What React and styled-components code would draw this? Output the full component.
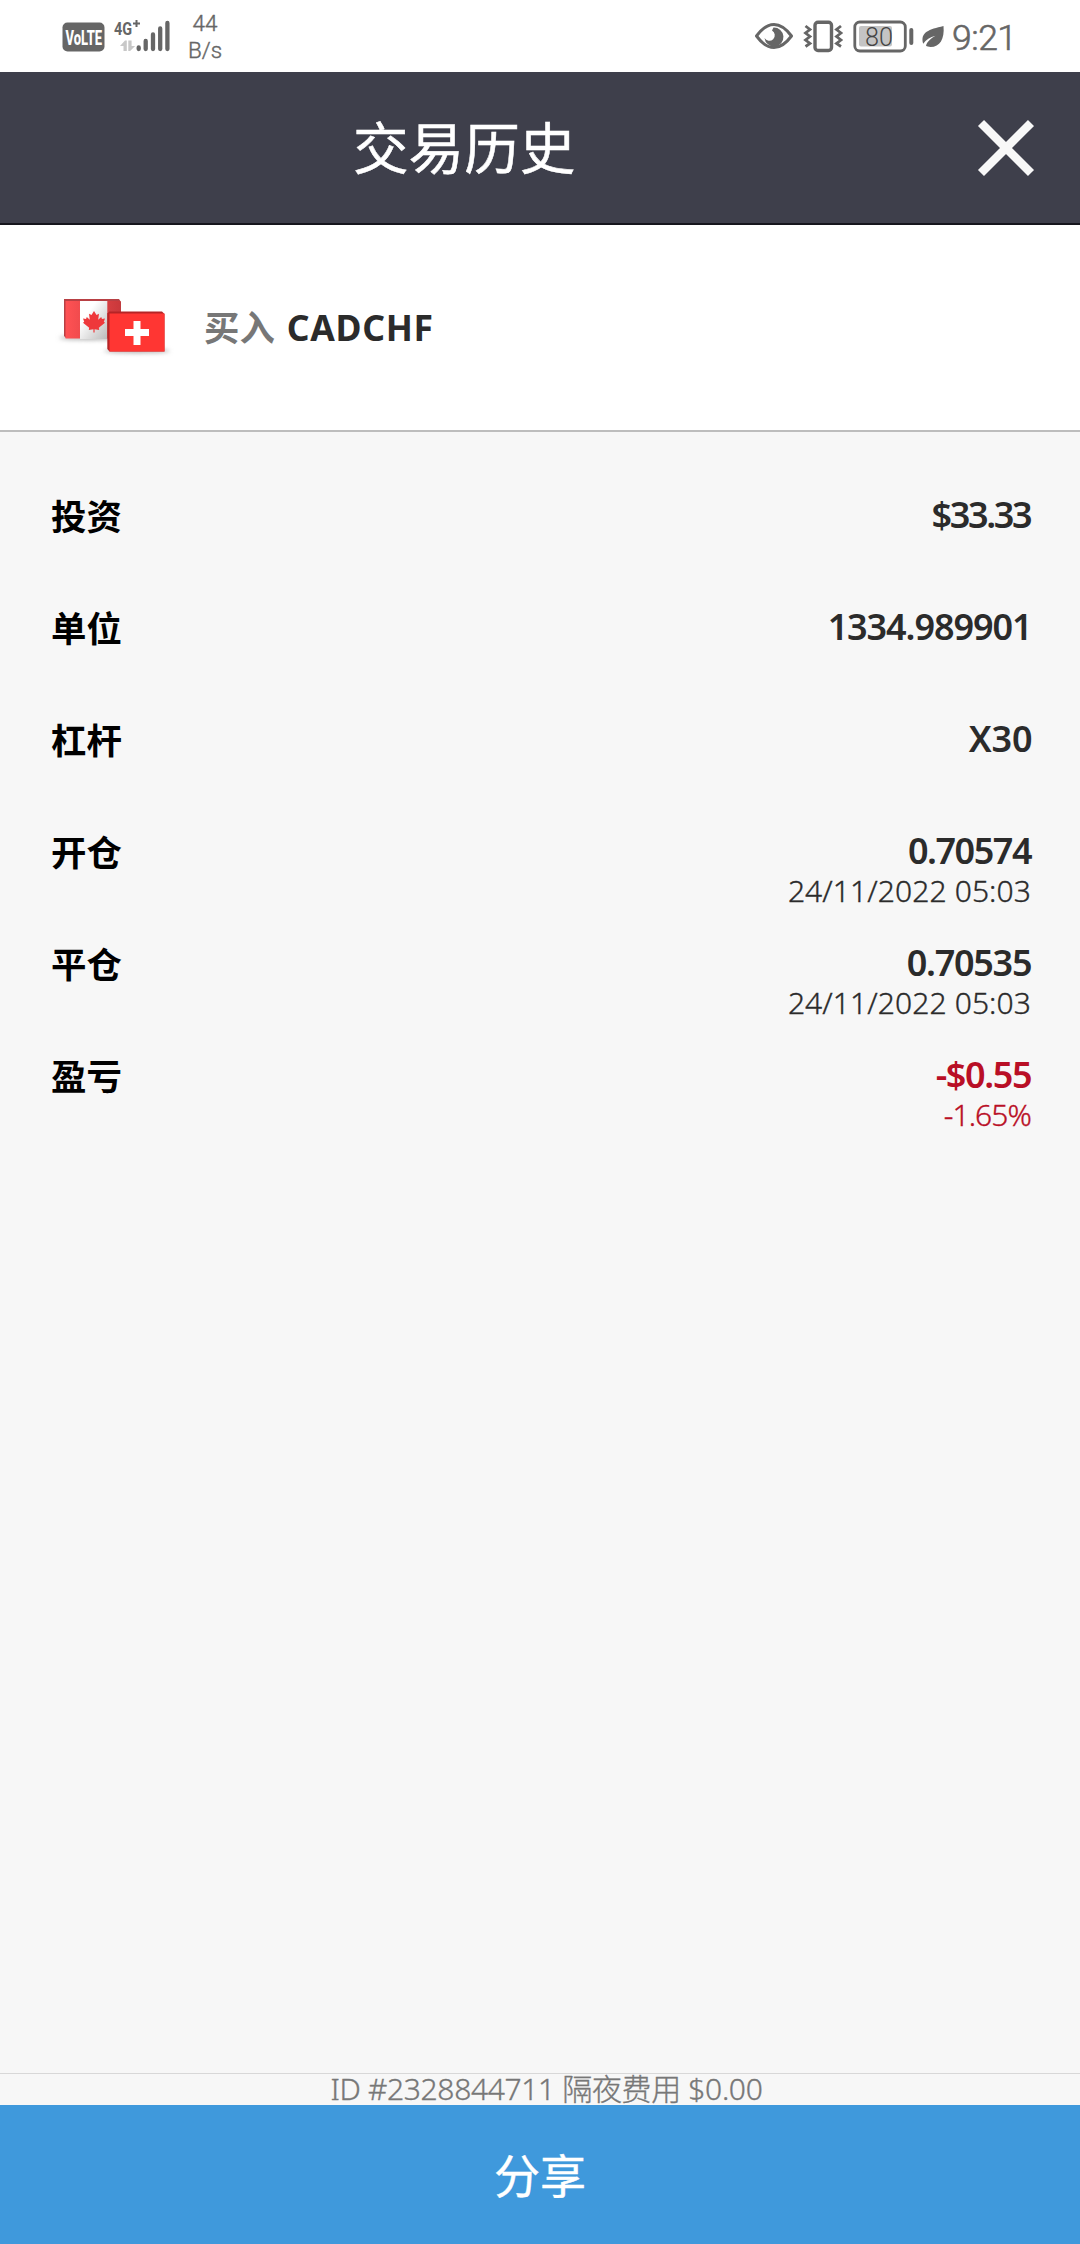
import React from 'react'
import styled, { createGlobalStyle } from 'styled-components'

const GlobalStyle = createGlobalStyle`
    * {
        box-sizing: border-box;
    }
    body {
        margin: 0;
        background: #f7f7f7;
        font-family: 'Noto Sans', 'Noto Sans CJK SC', sans-serif;
    }
`

const Screen = styled.div`
    width: 1080px;
    height: 2244px;
    display: flex;
    flex-direction: column;
    background: #f7f7f7;
    overflow: hidden;
`

const StatusBar = styled.div`
    height: 72px;
    flex: none;
    display: flex;
    justify-content: space-between;
    padding: 0 64px 0 62px;
    background: #fff;
    color: #666;
    font-family: Roboto, sans-serif;
`

const StatusGroup = styled.div`
    display: flex;
    align-items: flex-start;
`

const NetSpeed = styled.div`
    width: 40px;
    margin-left: 10px;
    padding-top: 10px;
    font-size: 22.5px;
    line-height: 27px;
    font-weight: 300;
    -webkit-text-stroke: 0.4px;
    text-align: center;
`

const Clock = styled.div`
    width: 64px;
    margin-left: 5px;
    padding-top: 14px;
    font-size: 35.5px;
    line-height: 48px;
    font-weight: 300;
    -webkit-text-stroke: 0.6px;
    letter-spacing: -0.5px;
    white-space: nowrap;
`

const Header = styled.header`
    height: 153px;
    flex: none;
    display: flex;
    justify-content: space-between;
    align-items: center;
    padding: 0 43px 0 353px;
    background: #3e3f4b;
    border-bottom: 2px solid #16151d;
`

const Title = styled.h1`
    margin: 0;
    padding-bottom: 5px;
    color: #fff;
    font-family: 'Noto Sans CJK SC', sans-serif;
    font-size: 55.6px;
    line-height: 80px;
    font-weight: 400;
    -webkit-text-stroke: 0.5px;
`

const CloseButton = styled.button`
    display: flex;
    padding: 0;
    border: 0;
    background: none;
`

const Instrument = styled.section`
    height: 207px;
    flex: none;
    display: flex;
    align-items: center;
    padding: 0 0 2px 54px;
    background: #fff;
    border-bottom: 2px solid #bdbdbd;
`

const Pair = styled.div`
    display: flex;
    align-items: baseline;
    gap: 12px;
    margin-left: 27px;
    color: #2b2b2b;
    font-size: 35.5px;
    line-height: 52px;
    font-weight: 700;
    letter-spacing: 0.7px;
`

const Side = styled.span`
    color: #777;
    font-family: 'Noto Sans CJK SC', sans-serif;
    font-size: 35.4px;
    letter-spacing: 0;
`

const Details = styled.dl`
    flex: 1;
    margin: 0;
    padding: 57px 49px 0 51px;
`

const Row = styled.div`
    height: 112px;
    display: flex;
    justify-content: space-between;
    align-items: flex-start;
`

const Label = styled.dt`
    color: #000;
    font-family: 'Noto Sans CJK SC', sans-serif;
    font-size: 35.4px;
    line-height: 52px;
    font-weight: 700;
`

const Values = styled.dd`
    margin: 0;
    display: flex;
    flex-direction: column;
    align-items: flex-end;
    color: ${({ $loss }) => ($loss ? '#b90f26' : '#2b2b2b')};
`

const Value = styled.span`
    font-size: 36px;
    line-height: 52px;
    font-weight: 600;
    letter-spacing: ${({ $spacing }) => $spacing}px;
    margin-right: ${({ $spacing }) => -$spacing - 1.5}px;
`

const SubValue = styled.span`
    font-size: 30px;
    line-height: 28px;
    font-weight: 300;
    -webkit-text-stroke: 0.35px;
    letter-spacing: ${({ $spacing = 0.1 }) => $spacing}px;
`

const TradeInfo = styled.div`
    height: 32px;
    flex: none;
    border-top: 1px solid #d8d8d8;
    padding-left: 13px;
    color: #777;
    font-size: 30px;
    line-height: 29px;
    font-weight: 300;
    -webkit-text-stroke: 0.35px;
    letter-spacing: -0.35px;
    text-align: center;
    white-space: nowrap;
`

const ShareButton = styled.button`
    height: 139px;
    flex: none;
    border: 0;
    padding: 0 0 4px;
    background: #3f99dc;
    color: #fff;
    font-family: 'Noto Sans CJK SC', sans-serif;
    font-size: 46px;
    line-height: 60px;
    font-weight: 400;
    -webkit-text-stroke: 0.4px;
`

const SignalIcons = () => (
  <svg width="113" height="72" viewBox="62 0 113 72" fill="#666">
    <rect x="62.5" y="22.5" width="42" height="29" rx="5" />
    <text transform="translate(65.5 44.5) scale(0.65 1)" fill="#fff" fontFamily="Roboto" fontSize="20" fontWeight="800">VoLTE</text>
    <text transform="translate(114 34.5) scale(0.76 1)" fontFamily="Roboto" fontSize="19" fontWeight="700">4G</text>
    <path d="M133 23.5h7M136.500 20v7" stroke="#666" strokeWidth="2" />
    <path d="M120 46l5-5.500h1.800V51h-3.300v-5ZM128.300 40.500h3.300V46h3.500l-5 5h-1.800Z" fill="#c8c8c8" />
    <path d="M138.700 47.500v1.500M145.700 41v8M153 34.500V49M160.200 28.500V49M167.400 23v26" stroke="#666" strokeWidth="4.300" strokeLinecap="round" />
  </svg>
)

const DeviceIcons = () => (
  <svg width="194" height="72" viewBox="753 0 194 72" fill="none" stroke="#666">
    <path d="M756.500 36Q765 24.500 774 24.500T791.500 36Q783 47.500 774 47.500T756.500 36Z" strokeWidth="3" strokeLinejoin="round" />
    <path d="M773.500 27.500a9.500 9.500 0 1 1-9 10.500 5.500 5.500 0 1 0 7.500-7.500Z" fill="#666" stroke="none" />
    <rect x="815" y="22.300" width="16.500" height="28.200" rx="3" strokeWidth="3.400" />
    <path d="M805.500 26l4.500 3.500-4.500 3.500 4.500 3.500-4.500 3.500 4.500 3.500-4.500 3M841 26l-4.500 3.500 4.500 3.500-4.500 3.500 4.500 3.500-4.500 3.500 4.500 3" strokeWidth="2.800" />
    <rect x="854.800" y="22" width="50.500" height="29" rx="5" strokeWidth="2.800" />
    <rect x="859" y="26" width="33" height="20.500" rx="2" fill="#c4c4c4" stroke="none" />
    <path d="M911.300 30v13" strokeWidth="4" strokeLinecap="round" />
    <text x="865" y="45.500" fill="#444" stroke="none" fontFamily="Roboto" fontSize="26" fontWeight="300" textLength="28" lengthAdjust="spacingAndGlyphs">80</text>
    <path d="M943.500 26c1.200 13-3.500 21-13 21-2 0-3.500-.5-4.500-1.200 1-4 5-7.500 9.500-10-5.500 1.200-9.500 4-12.300 8C920 32 929 29.500 943.500 26Z" fill="#666" stroke="none" />
  </svg>
)

const CloseIcon = () => (
  <svg width="62" height="62" viewBox="0 0 62 62" stroke="#f8f8f8" strokeWidth="8.500">
    <path d="M6 6l50 50M56 6L6 56" />
  </svg>
)

const PairFlags = () => (
  <svg width="123" height="72" viewBox="54 291 123 72">
    <defs>
      <linearGradient id="caRed" x2="1" y2="0">
        <stop offset="0" stopColor="#ff5254" />
        <stop offset="1" stopColor="#c9383b" />
      </linearGradient>
      <linearGradient id="caWhite" x2="1" y2="1">
        <stop offset="0.3" stopColor="#fff" />
        <stop offset="1" stopColor="#bbb" />
      </linearGradient>
      <filter id="soft" x="-20%" y="-200%" width="140%" height="500%">
        <feGaussianBlur stdDeviation="2" />
      </filter>
    </defs>
    <ellipse cx="90" cy="338" rx="31" ry="2" fill="#aaa" filter="url(#soft)" />
    <ellipse cx="137" cy="351" rx="33" ry="2" fill="#aaa" filter="url(#soft)" />
    <path d="M64 299h55l2 3v36H66l-2-2Z" fill="#b84044" />
    <rect x="65.500" y="301" width="55" height="37.500" fill="url(#caRed)" />
    <rect x="80" y="301" width="27.300" height="38" fill="url(#caWhite)" />
    <path d="M94 311l2.500 4 2.500-1.300-.8 6 3-2.800.8 2 3-.4-1.200 3.200 1.200 1-6.200 5 .4 2.200-4.600-.7v3.300h-1.200v-3.300l-4.600.7.4-2.200-6.200-5 1.200-1-1.200-3.200 3 .4.8-2 3 2.800-.8-6 2.500 1.300Z" fill="#ee383b" />
    <path d="M107.300 313.500l2-2H162l2.500 2.500v37.500h-55l-2.200-2.500Z" fill="#b52426" />
    <path d="M109.500 313.500h55v38h-55Z" fill="#ff3633" />
    <path d="M137 321v24M125 332.500h24" stroke="#fff" strokeWidth="7" />
  </svg>
)

const rows = [
  { label: '投资', value: '$33.33', spacing: -2.4 },
  { label: '单位', value: '1334.989901', spacing: -1.1 },
  { label: '杠杆', value: 'X30', spacing: -0.2 },
  { label: '开仓', value: '0.70574', sub: '24/11/2022 05:03', spacing: -1.5 },
  { label: '平仓', value: '0.70535', sub: '24/11/2022 05:03', spacing: -1.3 },
  { label: '盈亏', value: '-$0.55', sub: '-1.65%', spacing: -1.4, subSpacing: -0.9, loss: true },
]

const App = () => {
  return (
    <Screen>
      <GlobalStyle />
      <StatusBar>
        <StatusGroup>
          <SignalIcons />
          <NetSpeed>44<br />B/s</NetSpeed>
        </StatusGroup>
        <StatusGroup>
          <DeviceIcons />
          <Clock>9:21</Clock>
        </StatusGroup>
      </StatusBar>
      <Header>
        <Title>交易历史</Title>
        <CloseButton aria-label="close">
          <CloseIcon />
        </CloseButton>
      </Header>
      <Instrument>
        <PairFlags />
        <Pair>
          <Side>买入</Side>
          <span>CADCHF</span>
        </Pair>
      </Instrument>
      <Details>
        {rows.map(({ label, value, sub, spacing, subSpacing, loss }) => (
          <Row key={label}>
            <Label>{label}</Label>
            <Values $loss={loss}>
              <Value $spacing={spacing}>{value}</Value>
              {sub && <SubValue $spacing={subSpacing}>{sub}</SubValue>}
            </Values>
          </Row>
        ))}
      </Details>
      <TradeInfo>ID #2328844711 隔夜费用 $0.00</TradeInfo>
      <ShareButton>分享</ShareButton>
    </Screen>
  )
}

export default App
